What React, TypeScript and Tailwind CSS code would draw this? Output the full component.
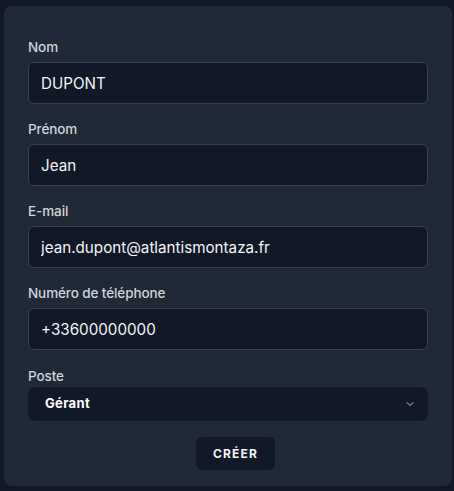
import { useState } from "react";

const fields = [
  { id: "nom", label: "Nom", value: "DUPONT" },
  { id: "prenom", label: "Prénom", value: "Jean" },
  { id: "email", label: "E-mail", value: "jean.dupont@atlantismontaza.fr" },
  { id: "tel", label: "Numéro de téléphone", value: "+33600000000" },
];

export default function App() {
  const [values, setValues] = useState<Record<string, string>>(() =>
    Object.fromEntries(fields.map((f) => [f.id, f.value]))
  );

  return (
    <div
      className="min-h-screen bg-[#111827] pt-1.5 pl-1"
      style={{ fontFamily: "Inter, 'Noto Sans', sans-serif" }}
    >
      <div className="w-[448px] h-[480px] rounded-lg bg-[#1f2937] px-6 pt-[31px]">
        <div className="flex flex-col gap-[15px]">
          {fields.map((f) => (
            <div key={f.id}>
              <label
                htmlFor={f.id}
                className="block mb-[5px] text-[13.5px] font-medium leading-5 tracking-[-0.1px] text-gray-300"
              >
                {f.label}
              </label>
              <input
                id={f.id}
                type="text"
                value={values[f.id]}
                onChange={(e) =>
                  setValues({ ...values, [f.id]: e.target.value })
                }
                className="w-full h-[42px] rounded-md border border-[#374151] bg-[#111827] px-3 text-[15.2px] text-gray-100 focus:outline-none"
              />
            </div>
          ))}

          {/* Poste */}
          <div className="mt-px">
            <label className="block mb-px text-[13.5px] font-medium leading-5 tracking-[-0.1px] text-gray-300">
              Poste
            </label>
            <button
              type="button"
              className="w-full h-[34px] rounded-lg bg-[#111827] pl-[17px] pr-[12px] flex items-center justify-between"
            >
              <span className="text-[13px] font-bold tracking-wide text-white">
                Gérant
              </span>
              <svg
                className="w-3 h-3 text-gray-500"
                viewBox="0 0 24 24"
                fill="none"
                stroke="currentColor"
                strokeWidth={2.5}
                strokeLinecap="round"
                strokeLinejoin="round"
              >
                <path d="M6 9l6 6 6-6" />
              </svg>
            </button>
          </div>
        </div>

        <div className="flex justify-center mt-4 pl-[15px]">
          <button
            type="submit"
            className="h-[33px] w-[79px] rounded-md bg-[#111827] text-xs font-bold tracking-widest text-gray-100"
          >
            CRÉER
          </button>
        </div>
      </div>
    </div>
  );
}
